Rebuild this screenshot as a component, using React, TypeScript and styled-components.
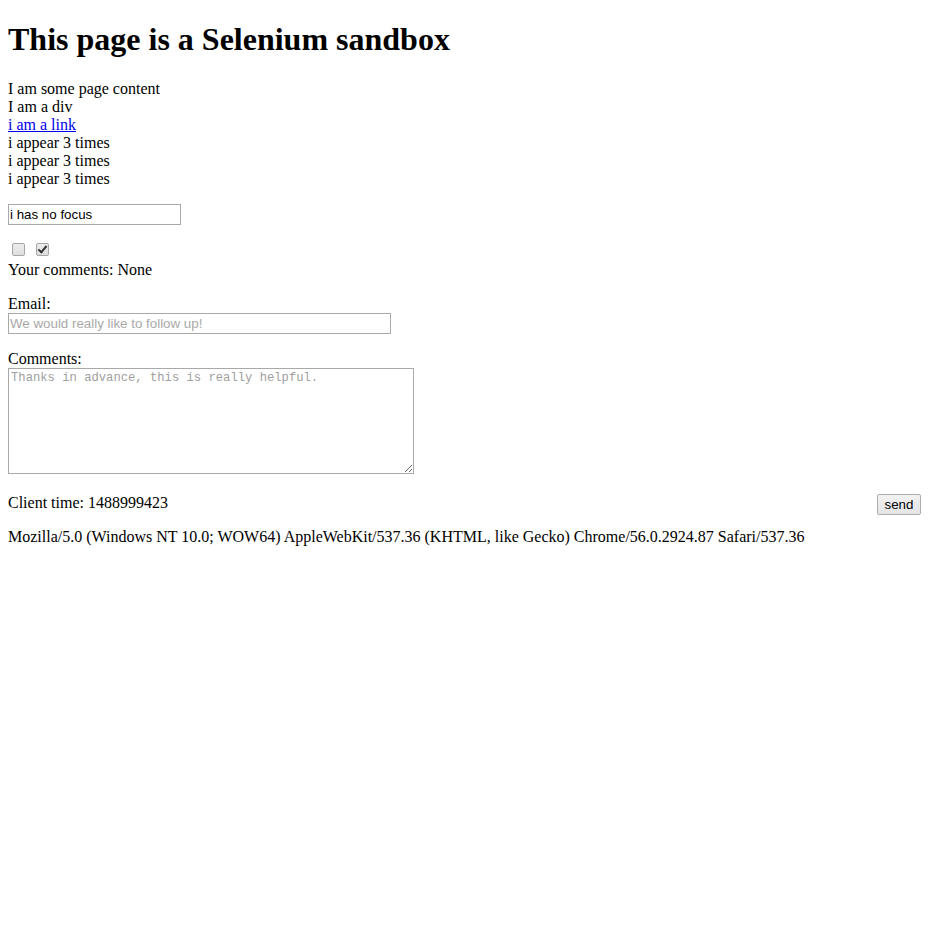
import React from "react";
import styled, { createGlobalStyle } from "styled-components";

const Global = createGlobalStyle`
  html, body { background: #ffffff; }
  body {
    margin: 8px;
    font-family: "Liberation Serif", "Times New Roman", serif;
    font-size: 16px;
    color: #000000;
  }
`;

const Title = styled.h1`
  font-size: 32px;
  font-weight: bold;
  margin: 13.44px 0 21.44px;
`;

const Line = styled.div``;

const LinkLine = styled.a`
  display: block;
  color: #0000ee;
  text-decoration: underline;
  cursor: pointer;
`;

const Para = styled.p`
  margin: 16px 0;
`;

const TextField = styled.input<{ $width: number }>`
  display: block;
  box-sizing: border-box;
  width: ${(p) => p.$width}px;
  height: 21px;
  margin: 0;
  padding: 1px 1px;
  border: 1px solid #a9a9a9;
  font-family: "Liberation Sans", Arial, sans-serif;
  font-size: 13.33px;
  color: #000000;
  background: #ffffff;
  outline: none;
  &::placeholder {
    color: #a9a9a9;
  }
`;

const CheckRow = styled.div`
  height: 20px;
  display: flex;
  align-items: flex-start;
  padding-top: 2px;
  box-sizing: border-box;
`;

const Check = styled.input`
  appearance: none;
  -webkit-appearance: none;
  position: relative;
  box-sizing: border-box;
  width: 13px;
  height: 13px;
  margin: 0 7px 0 4px;
  border: 1px solid #a6a6a6;
  border-radius: 2px;
  background: linear-gradient(#ededed, #dedede);
  &:checked::after {
    content: "";
    position: absolute;
    left: 3px;
    top: 0px;
    width: 3px;
    height: 7px;
    border-right: 2px solid #333333;
    border-bottom: 2px solid #333333;
    transform: rotate(40deg);
  }
`;

const CommentBox = styled.textarea`
  box-sizing: border-box;
  width: 406px;
  height: 106px;
  margin: 0;
  padding: 2px;
  border: 1px solid #a9a9a9;
  font-family: "Liberation Mono", "Courier New", monospace;
  font-size: 12.2px;
  line-height: 15px;
  color: #000000;
  outline: none;
  vertical-align: baseline;
  &::placeholder {
    color: #a0a0a0;
  }
`;

const SendButton = styled.button`
  float: right;
  box-sizing: border-box;
  width: 44px;
  height: 21px;
  margin: 0;
  padding: 0 6px;
  border: 1px solid #adadad;
  border-radius: 2px;
  background: linear-gradient(#f2f2f2, #e4e4e4);
  font-family: "Liberation Sans", Arial, sans-serif;
  font-size: 13.33px;
  color: #000000;
  cursor: pointer;
`;

export default function App() {
  return (
    <>
      <Global />
      <Title>This page is a Selenium sandbox</Title>
      <Line>I am some page content</Line>
      <Line>I am a div</Line>
      <LinkLine>i am a link</LinkLine>
      <Line>i appear 3 times</Line>
      <Line>i appear 3 times</Line>
      <Line>i appear 3 times</Line>
      <form onSubmit={(e) => e.preventDefault()}>
        <Para>
          <TextField $width={173} type="text" defaultValue="i has no focus" />
        </Para>
        <CheckRow>
          <Check type="checkbox" />
          <Check type="checkbox" defaultChecked />
        </CheckRow>
        <Line>Your comments: None</Line>
        <Para>
          Email:
          <TextField $width={383} type="text" placeholder="We would really like to follow up!" />
        </Para>
        <Para>
          Comments:
          <br />
          <CommentBox placeholder="Thanks in advance, this is really helpful." />
        </Para>
        <Para>
          <SendButton type="button">send</SendButton>
          Client time: 1488999423
        </Para>
        <Para>
          Mozilla/5.0 (Windows NT 10.0; WOW64) AppleWebKit/537.36 (KHTML, like Gecko) Chrome/56.0.2924.87 Safari/537.36
        </Para>
      </form>
    </>
  );
}
